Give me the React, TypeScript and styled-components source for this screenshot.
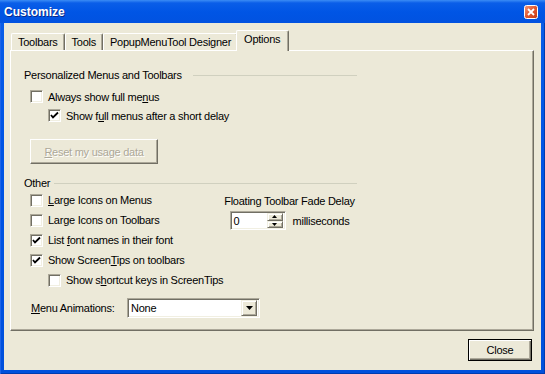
import React from 'react';
import styled, { createGlobalStyle } from 'styled-components';

const GlobalStyle = createGlobalStyle`
  html, body {
    margin: 0;
    padding: 0;
    background: #ece9d8;
  }
  body {
    font-family: Tahoma, 'Liberation Sans', Arial, sans-serif;
    font-size: 11px;
    letter-spacing: -0.25px;
    color: #000;
  }
`;

const Window = styled.div`
  width: 545px;
  height: 374px;
  box-sizing: border-box;
  padding: 0 4px 4px 4px;
  display: flex;
  flex-direction: column;
  background: linear-gradient(180deg, #0a5ee8 0%, #0055e5 40%, #0050dc 100%);
  box-shadow: inset 1px 0 0 #1e64e8, inset -1px 0 0 #003cb0, inset 0 -1px 0 #003cb0;
`;

const TitleBar = styled.div`
  height: 23px;
  display: flex;
  align-items: center;
  justify-content: space-between;
  background: linear-gradient(180deg, #3b8cf5 0px, #0a5ee8 3px, #0055e5 12px, #0152e0 100%);
  margin: 0 -4px;
  padding: 0 7px 0 4px;
`;

const Title = styled.span`
  font-family: 'Liberation Sans', Arial, sans-serif;
  font-weight: bold;
  font-size: 12px;
  letter-spacing: 0;
  color: #fff;
  text-shadow: 1px 1px 0 #0a2a8a;
`;

const Body = styled.div`
  flex: 1;
  background: #ece9d8;
  padding: 7px 7px 0 6px;
  display: flex;
  flex-direction: column;
`;

const TabStrip = styled.div`
  height: 20px;
  display: flex;
  align-items: flex-end;
  padding-left: 1px;
`;

const Tab = styled.div<{ $active?: boolean }>`
  position: relative;
  z-index: ${p => (p.$active ? 1 : 0)};
  box-sizing: border-box;
  height: ${p => (p.$active ? '21px' : '17px')};
  margin: ${p => (p.$active ? '0 -2px -1px -2px' : '0')};
  padding: ${p => (p.$active ? '2px 8px 0 7px' : '2px 6px 0 6px')};
  background: #ece9d8;
  border-left: 1px solid #fff;
  border-top: 1px solid #fff;
  border-right: 1px solid #716f64;
  border-radius: 2px 2px 0 0;
  box-shadow: inset -1px 0 0 #aca899;
  white-space: nowrap;
  line-height: 13px;
`;

const Panel = styled.div`
  height: 281px;
  box-sizing: border-box;
  border: 1px solid;
  border-color: #fff #716f64 #716f64 #fff;
  box-shadow: inset -1px -1px 0 #aca899;
  padding: 17px 0 0 13px;
`;

const Content = styled.div`
  width: 333px;
  display: flex;
  flex-direction: column;
`;

const GroupHeader = styled.div<{ $gap?: number }>`
  height: 14px;
  display: flex;
  align-items: center;
  gap: ${p => p.$gap ?? 4}px;
  white-space: nowrap;

  &::after {
    content: '';
    flex: 1;
    border-top: 1px solid #d0d0bf;
  }
`;

const CheckRow = styled.div<{ $indent?: boolean; $h?: number }>`
  height: ${p => p.$h ?? 20}px;
  display: flex;
  align-items: center;
  padding-left: ${p => (p.$indent ? 24 : 6)}px;
  white-space: nowrap;
`;

const Box = styled.span`
  width: 13px;
  height: 13px;
  box-sizing: border-box;
  margin-right: 5px;
  background: #fff;
  border: 1px solid;
  border-color: #aca899 #fff #fff #aca899;
  box-shadow: inset 1px 1px 0 #716f64, inset -1px -1px 0 #f1efe2;
  display: flex;
  align-items: center;
  justify-content: center;
  flex: none;
`;

const ResetButton = styled.div`
  width: 128px;
  height: 25px;
  box-sizing: border-box;
  margin: 14px 0 0 6px;
  border: 1px solid;
  border-color: #fff #716f64 #716f64 #fff;
  box-shadow: inset -1px -1px 0 #aca899;
  display: flex;
  align-items: center;
  justify-content: center;
  color: #aca899;
  text-shadow: 1px 1px 0 #fff;
`;

const OtherGrid = styled.div`
  display: grid;
  grid-template-columns: 198px 1fr;
`;

const FadeBlock = styled.div`
  padding-top: 4px;
  display: flex;
  flex-direction: column;
  align-items: center;
  white-space: nowrap;
  line-height: 14px;
`;

const SpinRow = styled.div`
  margin-top: 3px;
  display: flex;
  align-items: center;
  gap: 7px;
`;

const Sunken = styled.div`
  box-sizing: border-box;
  background: #fff;
  border: 1px solid;
  border-color: #aca899 #fff #fff #aca899;
  box-shadow: inset 1px 1px 0 #716f64, inset -1px -1px 0 #f1efe2;
  display: flex;
  align-items: center;
`;

const SpinField = styled(Sunken)`
  width: 56px;
  height: 19px;
  padding: 2px 2px 2px 3px;
`;

const SpinValue = styled.span`
  flex: 1;
`;

const SpinButtons = styled.div`
  width: 16px;
  height: 15px;
  display: flex;
  flex-direction: column;
`;

const Raised = styled.div`
  box-sizing: border-box;
  background: #ece9d8;
  border: 1px solid;
  border-color: #f1efe2 #716f64 #716f64 #f1efe2;
  box-shadow: inset 1px 1px 0 #fff, inset -1px -1px 0 #aca899;
  display: flex;
  align-items: center;
  justify-content: center;
`;

const SpinButton = styled(Raised)`
  flex: 1;
`;

const MenuRow = styled.div`
  margin-top: 8px;
  display: flex;
  align-items: center;
  padding-left: 7px;
  white-space: nowrap;
`;

const MenuLabel = styled.span`
  width: 96px;
`;

const Combo = styled(Sunken)`
  width: 133px;
  height: 20px;
  padding: 2px 2px 2px 3px;
`;

const ComboText = styled.span`
  flex: 1;
`;

const DropButton = styled(Raised)`
  width: 16px;
  height: 16px;
`;

const Footer = styled.div`
  display: flex;
  justify-content: flex-end;
  padding: 8px 2px 0 0;
`;

const CloseButton = styled.div`
  width: 64px;
  height: 22px;
  box-sizing: border-box;
  border: 1px solid #000;
  box-shadow: inset 1px 1px 0 #fff, inset -1px -1px 0 #716f64, inset -2px -2px 0 #aca899;
  display: flex;
  align-items: center;
  justify-content: center;
`;

const Check = ({ checked }: { checked?: boolean }) => (
  <Box>
    {checked && (
      <svg width="9" height="9" viewBox="0 0 9 9">
        <path d="M1 4 L3 6.5 L8 1.5" fill="none" stroke="#000" strokeWidth="1.8" />
      </svg>
    )}
  </Box>
);

const Arrow = ({ dir, size = 5 }: { dir: 'up' | 'down'; size?: number }) => (
  <svg width={size} height={Math.ceil(size / 2)} viewBox={`0 0 ${size} ${Math.ceil(size / 2)}`}>
    {dir === 'down' ? (
      <polygon points={`0,0 ${size},0 ${size / 2},${Math.ceil(size / 2)}`} fill="#000" />
    ) : (
      <polygon points={`0,${Math.ceil(size / 2)} ${size},${Math.ceil(size / 2)} ${size / 2},0`} fill="#000" />
    )}
  </svg>
);

const CloseIcon = () => (
  <svg width="14" height="14" viewBox="0 0 14 14">
    <defs>
      <linearGradient id="cg" x1="0" y1="0" x2="1" y2="1">
        <stop offset="0" stopColor="#f49a7c" />
        <stop offset="0.5" stopColor="#e2572f" />
        <stop offset="1" stopColor="#c23b14" />
      </linearGradient>
    </defs>
    <rect x="0.5" y="0.5" width="13" height="13" rx="2" fill="url(#cg)" stroke="#fff" />
    <path d="M4 4 L10 10 M10 4 L4 10" stroke="#fff" strokeWidth="1.8" />
  </svg>
);

const App: React.FC = () => {
  return (
    <Window>
      <GlobalStyle />
      <TitleBar>
        <Title>Customize</Title>
        <CloseIcon />
      </TitleBar>

      <Body>
        <TabStrip>
          <Tab>Toolbars</Tab>
          <Tab>Tools</Tab>
          <Tab>PopupMenuTool Designer</Tab>
          <Tab $active>Options</Tab>
        </TabStrip>

        <Panel>
          <Content>
            <GroupHeader $gap={11}>Personalized Menus and Toolbars</GroupHeader>
            <CheckRow $h={19} style={{ marginTop: 5 }}>
              <Check />
              Always show full me<u>n</u>us
            </CheckRow>
            <CheckRow $h={19} $indent>
              <Check checked />
              Show f<u>u</u>ll menus after a short delay
            </CheckRow>

            <ResetButton>
              <span><u>R</u>eset my usage data</span>
            </ResetButton>

            <GroupHeader style={{ marginTop: 12 }}>Other</GroupHeader>
            <OtherGrid>
              <div>
                <CheckRow>
                  <Check />
                  <span><u>L</u>arge Icons on Menus</span>
                </CheckRow>
                <CheckRow>
                  <Check />
                  <span>Lar<u>g</u>e Icons on Toolbars</span>
                </CheckRow>
                <CheckRow>
                  <Check checked />
                  <span>List <u>f</u>ont names in their font</span>
                </CheckRow>
                <CheckRow>
                  <Check checked />
                  <span>Show Screen<u>T</u>ips on toolbars</span>
                </CheckRow>
                <CheckRow $indent>
                  <Check />
                  <span>Show s<u>h</u>ortcut keys in ScreenTips</span>
                </CheckRow>
              </div>
              <FadeBlock>
                <span>Floating Toolbar Fade Delay</span>
                <SpinRow>
                  <SpinField>
                    <SpinValue>0</SpinValue>
                    <SpinButtons>
                      <SpinButton><Arrow dir="up" /></SpinButton>
                      <SpinButton><Arrow dir="down" /></SpinButton>
                    </SpinButtons>
                  </SpinField>
                  <span>milliseconds</span>
                </SpinRow>
              </FadeBlock>
            </OtherGrid>

            <MenuRow>
              <MenuLabel><u>M</u>enu Animations:</MenuLabel>
              <Combo>
                <ComboText>None</ComboText>
                <DropButton><Arrow dir="down" size={7} /></DropButton>
              </Combo>
            </MenuRow>
          </Content>
        </Panel>

        <Footer>
          <CloseButton>Close</CloseButton>
        </Footer>
      </Body>
    </Window>
  );
};

export default App;
